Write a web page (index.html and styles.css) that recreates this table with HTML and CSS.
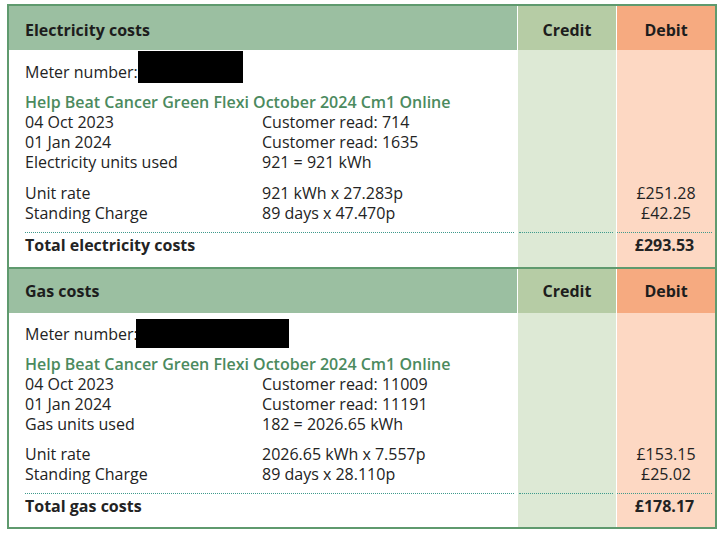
FILE: index.html
```html
<!DOCTYPE html>
<html lang="en">
<head>
<meta charset="utf-8">
<title>Costs</title>
<link rel="stylesheet" href="styles.css">
</head>
<body>
<div class="statement">
  <section class="block block-elec">
    <div class="head">
      <div class="head-title">Electricity costs</div>
      <div class="head-credit">Credit</div>
      <div class="head-debit">Debit</div>
    </div>
    <div class="body">
      <div class="fill fill-credit"></div>
      <div class="fill fill-debit"></div>
      <div class="info">
        <div class="meter meter-elec">Meter number:<span class="redact redact-elec"></span></div>
        <div class="tariff">Help Beat Cancer Green Flexi October 2024 Cm1 Online</div>
        <div class="pair"><span>04 Oct 2023</span><span>Customer read: 714</span></div>
        <div class="pair"><span>01 Jan 2024</span><span>Customer read: 1635</span></div>
        <div class="pair"><span>Electricity units used</span><span>921 = 921 kWh</span></div>
      </div>
      <div class="charges charges-elec">
        <div class="pair"><span>Unit rate</span><span>921 kWh x 27.283p</span></div>
        <div class="pair"><span>Standing Charge</span><span>89 days x 47.470p</span></div>
      </div>
      <div class="amounts amounts-elec">
        <div>£251.28</div>
        <div>£42.25</div>
      </div>
      <div class="total total-label">Total electricity costs</div>
      <div class="total total-credit"></div>
      <div class="total total-debit">£293.53</div>
    </div>
  </section>
  <section class="block block-gas">
    <div class="head">
      <div class="head-title">Gas costs</div>
      <div class="head-credit">Credit</div>
      <div class="head-debit">Debit</div>
    </div>
    <div class="body">
      <div class="fill fill-credit"></div>
      <div class="fill fill-debit"></div>
      <div class="info">
        <div class="meter meter-gas">Meter number:<span class="redact redact-gas"></span></div>
        <div class="tariff">Help Beat Cancer Green Flexi October 2024 Cm1 Online</div>
        <div class="pair"><span>04 Oct 2023</span><span>Customer read: 11009</span></div>
        <div class="pair"><span>01 Jan 2024</span><span>Customer read: 11191</span></div>
        <div class="pair"><span>Gas units used</span><span>182 = 2026.65 kWh</span></div>
      </div>
      <div class="charges charges-gas">
        <div class="pair"><span>Unit rate</span><span>2026.65 kWh x 7.557p</span></div>
        <div class="pair"><span>Standing Charge</span><span>89 days x 28.110p</span></div>
      </div>
      <div class="amounts amounts-gas">
        <div>£153.15</div>
        <div>£25.02</div>
      </div>
      <div class="total total-label">Total gas costs</div>
      <div class="total total-credit"></div>
      <div class="total total-debit">£178.17</div>
    </div>
  </section>
</div>
</body>
</html>
```
FILE: styles.css
```css
* { box-sizing: border-box; }
html, body { background: #ffffff; }
body {
  margin: 0;
  font-family: "Open Sans", "Noto Sans", sans-serif;
  font-size: 16px;
  line-height: 20px;
  color: #232323;
}
.statement {
  margin: 4px 0 0 7px;
  width: 710px;
  border: 2px solid #5f9a6e;
  background: #ffffff;
}
.block + .block { border-top: 2px solid #5f9a6e; }
.head, .body {
  display: grid;
  grid-template-columns: 508px 98px 98px;
  column-gap: 1px;
}
.head { height: 44px; font-weight: 700; font-size: 16px; color: #1d1d1d; }
.head > div { display: flex; align-items: center; }
.block-elec .head > div { padding-top: 4px; }
.head-title { background: #9bbfa1; padding-left: 16px; }
.head-credit { background: #b6cca5; justify-content: center; }
.head-debit { background: #f6aa80; justify-content: center; }

.body { grid-template-rows: auto auto auto; }
.fill { grid-row: 1 / span 3; }
.fill-credit { grid-column: 2; background: #dde9d5; }
.fill-debit { grid-column: 3; background: #fdd8c3; }

.info { grid-column: 1; grid-row: 1; padding-left: 16px; }
.meter-elec { padding-top: 12px; margin-bottom: 10px; }
.meter-gas { padding-top: 11px; margin-bottom: 10px; }
.redact {
  display: inline-block;
  vertical-align: top;
  background: #000;
}
.redact-elec { width: 105px; height: 32px; margin: -11px 0 -1px 0; }
.redact-gas { width: 153px; height: 29px; margin: -5px 0 -4px -2px; }
.tariff { color: #4b8a5e; font-weight: 600; }
.pair { display: grid; grid-template-columns: 237px 1fr; }

.charges { grid-column: 1; grid-row: 2; padding: 11px 0 9px 16px; }
.charges-gas { padding-top: 10px; }
.amounts { grid-column: 3; grid-row: 2; padding-top: 11px; text-align: center; }
.amounts-gas { padding-top: 10px; }

.total {
  grid-row: 3;
  border-top: 1px dotted #3f9a8c;
  padding: 2px 0 0;
  min-height: 35px;
  font-weight: 700;
}
.block-gas .total { min-height: 34px; }
.total-label { grid-column: 1; margin: 0 3px 0 16px; }
.total-credit { grid-column: 2; margin: 0 3px 0 1px; }
.total-debit { grid-column: 3; margin: 0 3px 0 0; text-align: center; }
```
